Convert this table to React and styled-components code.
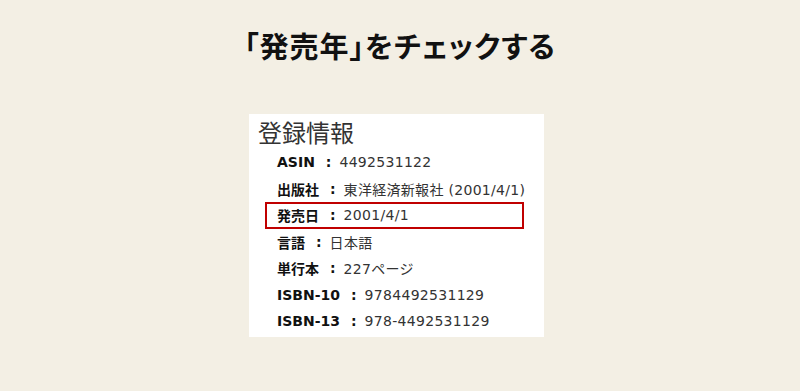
import styled, { createGlobalStyle } from "styled-components";

const GlobalStyle = createGlobalStyle`
  html, body {
    margin: 0;
    padding: 0;
    background: #f3efe4;
  }
  body {
    width: 800px;
    height: 391px;
    overflow: hidden;
    font-family: "DejaVu Sans", "Noto Sans CJK JP", sans-serif;
  }
`;

const Page = styled.div`
  display: flex;
  flex-direction: column;
  width: 800px;
  height: 391px;
`;

const Title = styled.h1`
  margin: 25px 0 0;
  text-align: center;
  font-family: "Noto Sans CJK JP", sans-serif;
  font-size: 29px;
  font-weight: 700;
  line-height: 40px;
  color: #111;
  font-feature-settings: "palt";
  letter-spacing: 1px;
`;

const Card = styled.section`
  margin: 49px 0 0 249px;
  width: 295px;
  height: 223px;
  box-sizing: border-box;
  background: #fff;
  padding: 3px 0 0 9px;
`;

const Heading = styled.h2`
  margin: 0 0 2px;
  font-family: "Noto Sans CJK JP", sans-serif;
  font-size: 24px;
  font-weight: 400;
  line-height: 30px;
  color: #333;
`;

const List = styled.ul`
  list-style: none;
  margin: 0;
  padding: 0 0 0 19px;
`;

const Row = styled.li`
  display: flex;
  align-items: center;
  height: 26.5px;
  margin-left: ${(p) => (p.marked ? "-12px" : "0")};
  padding-left: ${(p) => (p.marked ? "10px" : "0")};
  width: ${(p) => (p.marked ? "259px" : "auto")};
  box-sizing: border-box;
  border: ${(p) => (p.marked ? "2px solid #c00000" : "none")};
  font-size: 14px;
  color: #333;
  white-space: nowrap;
`;

const Label = styled.b`
  font-weight: 700;
  color: #111;
`;

const Colon = styled.b`
  margin: 0 8px 0 11px;
  font-weight: 700;
  color: #111;
`;

const Value = styled.span`
  letter-spacing: 0.3px;
`;

const rows = [
  ["ASIN", "4492531122"],
  ["出版社", "東洋経済新報社 (2001/4/1)"],
  ["発売日", "2001/4/1", true],
  ["言語", "日本語"],
  ["単行本", "227ページ"],
  ["ISBN-10", "9784492531129"],
  ["ISBN-13", "978-4492531129"],
];

export default function App() {
  return (
    <Page>
      <GlobalStyle />
      <Title>「発売年」をチェックする</Title>
      <Card>
        <Heading>登録情報</Heading>
        <List>
          {rows.map(([label, value, marked]) => (
            <Row key={label} marked={marked}>
              <Label>{label}</Label>
              <Colon>:</Colon>
              <Value>{value}</Value>
            </Row>
          ))}
        </List>
      </Card>
    </Page>
  );
}
